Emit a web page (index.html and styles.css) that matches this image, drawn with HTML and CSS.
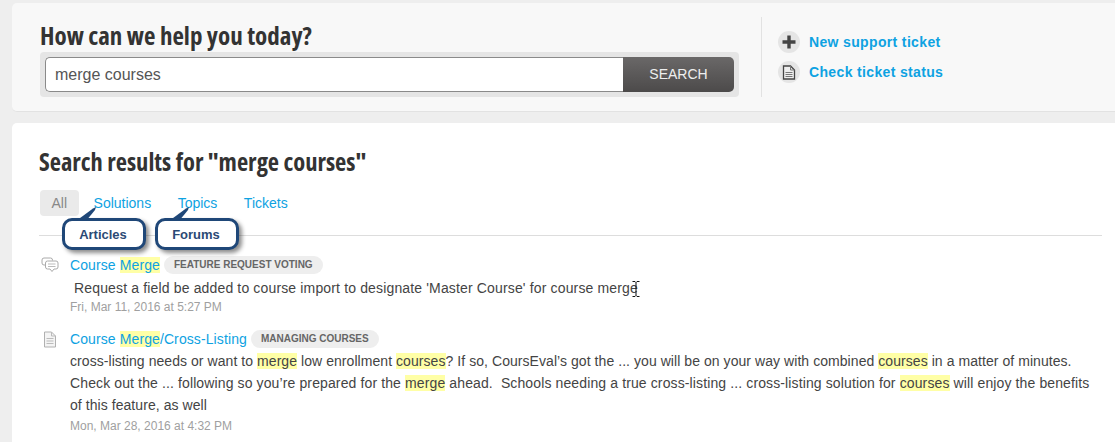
FILE: index.html
```html
<!DOCTYPE html>
<html lang="en">
<head>
  <meta charset="UTF-8">
  <title>Search results</title>
  <link rel="stylesheet" href="styles.css">
</head>
<body>
  <div class="card help">
    <div class="help-left">
      <h2 class="big-title help-title">How can we help you today?</h2>
      <div class="search-box">
        <div class="search-input">merge courses</div>
        <div class="search-btn">SEARCH</div>
      </div>
    </div>
    <div class="help-links">
      <a class="help-link">
        <span class="circle">
          <svg width="16" height="16" viewBox="0 0 16 16"><path d="M8 1.500v13M1.500 8h13" stroke="#444" stroke-width="3.400" fill="none"/></svg>
        </span>
        New support ticket
      </a>
      <a class="help-link">
        <span class="circle">
          <svg width="14" height="15" viewBox="0 0 14 15"><path d="M1.500 1h7l4 4v9h-11z" fill="#eee" stroke="#444" stroke-width="1.300"/><path d="M8.500 1v4h4M3.500 7.500h7M3.500 9.500h7M3.500 11.500h7" fill="none" stroke="#777"/></svg>
        </span>
        Check ticket status
      </a>
    </div>
  </div>

  <div class="card results">
    <h2 class="big-title">Search results for "merge courses"</h2>
    <div class="tabs">
      <span class="tab active">All</span>
      <a class="tab">Solutions</a>
      <a class="tab">Topics</a>
      <a class="tab">Tickets</a>
    </div>

    <div class="result first">
      <svg class="result-icon" width="18" height="17" viewBox="0 0 18 17">
        <path d="M11.500 3.500V3a2 2 0 0 0-2-2H3a2 2 0 0 0-2 2v3a2 2 0 0 0 2 2h1" fill="none" stroke="#aaa"/>
        <path d="M6.500 4h8.500a2 2 0 0 1 2 2v4a2 2 0 0 1-2 2h-2l-2 2.500-2-2.500h-2.500a2 2 0 0 1-2-2V6a2 2 0 0 1 2-2z" fill="#fff" stroke="#aaa"/>
        <path d="M7 7h7.500M7 9.500h7.500" stroke="#bbb"/>
      </svg>
      <div class="result-body">
        <div class="result-title"><a>Course <mark>Merge</mark></a><span class="badge">FEATURE REQUEST VOTING</span></div>
        <p class="desc">&nbsp;Request a field be added to course import to designate 'Master Course' for course merge</p>
        <div class="date">Fri, Mar 11, 2016 at 5:27 PM</div>
      </div>
    </div>

    <div class="result">
      <svg class="result-icon" width="18" height="17" viewBox="0 0 18 17">
        <path d="M3.500 1h7l4 4v11h-11z" fill="#f4f4f4" stroke="#b0b0b0"/>
        <path d="M10.500 1v4h4M5.500 7.500h7M5.500 10h7M5.500 12.500h7" fill="none" stroke="#bbb"/>
      </svg>
      <div class="result-body">
        <div class="result-title"><a>Course <mark>Merge</mark>/Cross-Listing</a><span class="badge">MANAGING COURSES</span></div>
        <p class="desc desc-long">cross-listing needs or want to <mark>merge</mark> low enrollment <mark>courses</mark>? If so, CoursEval’s got the ... you will be on your way with combined <mark>courses</mark> in a matter of minutes. <span class="wide">Check out the ... following so you’re prepared for the <mark>merge</mark> ahead.&nbsp; Schools needing a true cross-listing ... cross-listing solution for <mark>courses</mark> will enjoy the benefits</span> of this feature, as well</p>
        <div class="date">Mon, Mar 28, 2016 at 4:32 PM</div>
      </div>
    </div>
  </div>

  <!-- callouts sit on top of the page -->
  <div class="callout c-articles">Articles
    <svg class="tail" width="22" height="14" viewBox="0 0 22 14"><path d="M0 14L17 1.500l3-1.500-1 3-9 11z" fill="#1f4778"/></svg>
  </div>
  <div class="callout c-forums">Forums
    <svg class="tail" width="22" height="14" viewBox="0 0 22 14"><path d="M0 14L17 1.500l3-1.500-1 3-9 11z" fill="#1f4778"/></svg>
  </div>

  <svg class="ibeam" width="8" height="16" viewBox="0 0 8 16">
    <path d="M0.500 0.500h2.500l1 1 1-1h2.500M4 1.500v13M0.500 15.500h2.500l1-1 1 1h2.500" fill="none" stroke="#111"/>
  </svg>
</body>
</html>
```

FILE: styles.css
```css
body {
  margin: 0;
  padding: 3px 0 0 12px;
  height: 439px;
  overflow: hidden;
  background-color: #eeeeee;
  font-family: "Liberation Sans", Arial, sans-serif;
  font-size: 14px;
  color: #444;
  position: relative;
}
a {
  color: #0ea2e2;
}
mark {
  background-color: #ffffa6;
  color: inherit;
}
.card {
  width: 1113px;
  box-sizing: border-box;
  border-radius: 5px;
  border-bottom: 1px solid #e2e2e2;
}
.big-title {
  margin: 0;
  font-family: "Open Sans", sans-serif;
  font-stretch: 75%;
  font-size: 24.500px;
  font-weight: 700;
  line-height: 32px;
  color: #333;
}
.help-title {
  font-size: 25px;
  margin-top: 1px;
}

/* top box */
.help {
  display: flex;
  height: 109px;
  background-color: #f8f8f8;
  padding: 15px 0 0 28px;
}
.help-left {
  width: 699px;
}
.search-box {
  display: flex;
  height: 35px;
  padding: 5px;
  margin-top: 1px;
  background-color: #e5e5e5;
  border-radius: 4px;
}
.search-input {
  flex: 1;
  box-sizing: border-box;
  padding-left: 9px;
  line-height: 33px;
  font-size: 16px;
  color: #555;
  background-color: #fff;
  border: 1px solid #8a8a8a;
  border-right: none;
  border-radius: 5px 0 0 5px;
}
.search-btn {
  width: 111px;
  line-height: 35px;
  text-align: center;
  color: #eee;
  background: linear-gradient(#6a6868, #4c4a4a);
  border-radius: 0 5px 5px 0;
}
.help-links {
  display: flex;
  flex-direction: column;
  justify-content: center;
  gap: 8px;
  height: 80px;
  margin: -1px 0 0 22px;
  padding-left: 16px;
  border-left: 1px solid #e2e2e2;
}
.help-link {
  display: flex;
  align-items: center;
  gap: 9px;
  font-weight: 700;
  letter-spacing: 0.350px;
}
.circle {
  display: flex;
  align-items: center;
  justify-content: center;
  width: 22px;
  height: 22px;
  border-radius: 50%;
  background-color: #e5e5e5;
}

/* results box */
.results {
  height: 330px;
  margin-top: 11px;
  padding: 23px 23px 0 27px;
  background-color: #fff;
  border: none;
}
.tabs {
  display: flex;
  align-items: center;
  margin-top: 12px;
  border-bottom: 1px solid #ddd;
  padding-bottom: 20px;
  box-sizing: border-box;
  height: 46px;
}
.tab {
  margin-right: 26.500px;
}
.tab.active {
  margin: 0 15px 0 1px;
  padding: 0 11.500px;
  height: 26px;
  line-height: 26px;
  border-radius: 4px;
  color: #888;
  background-color: #eaeaea;
}
.result {
  display: flex;
  margin-top: 15px;
}
.result.first {
  margin-top: 20px;
}
.result-icon {
  flex: none;
  margin: 1px 11px 0 2px;
}
.result-body {
  padding-right: 6px;
}
.result-title {
  display: flex;
  align-items: center;
  height: 18px;
  letter-spacing: 0.100px;
}
.badge {
  margin-left: 4px;
  padding: 0 10px;
  height: 18px;
  line-height: 18px;
  border-radius: 9px;
  font-size: 10px;
  font-weight: 700;
  letter-spacing: 0;
  color: #666;
  background-color: #eee;
}
.desc {
  margin: 3px 0 0;
  line-height: 22px;
  letter-spacing: 0.150px;
}
.desc-long {
  margin: 2px 0 2px;
  letter-spacing: 0.060px;
}
.wide {
  letter-spacing: 0.120px;
}
.date {
  font-size: 12px;
  line-height: 16px;
  color: #a0a0a0;
}

/* annotations pasted over the shot */
.callout {
  position: absolute;
  top: 218px;
  box-sizing: content-box;
  width: 76px;
  height: 25px;
  padding: 1px 2px 0 0;
  line-height: 26px;
  text-align: center;
  font-size: 13px;
  font-weight: 700;
  color: #2b4a75;
  background-color: #fff;
  border: 3px solid #1f4778;
  border-radius: 10px;
  box-shadow: 3px 3px 4px rgba(0, 0, 0, 0.450);
}
.c-articles {
  left: 62px;
}
.c-forums {
  left: 155px;
}
.tail {
  position: absolute;
  left: 11px;
  top: -14px;
}
.ibeam {
  position: absolute;
  left: 632px;
  top: 281px;
}
```
